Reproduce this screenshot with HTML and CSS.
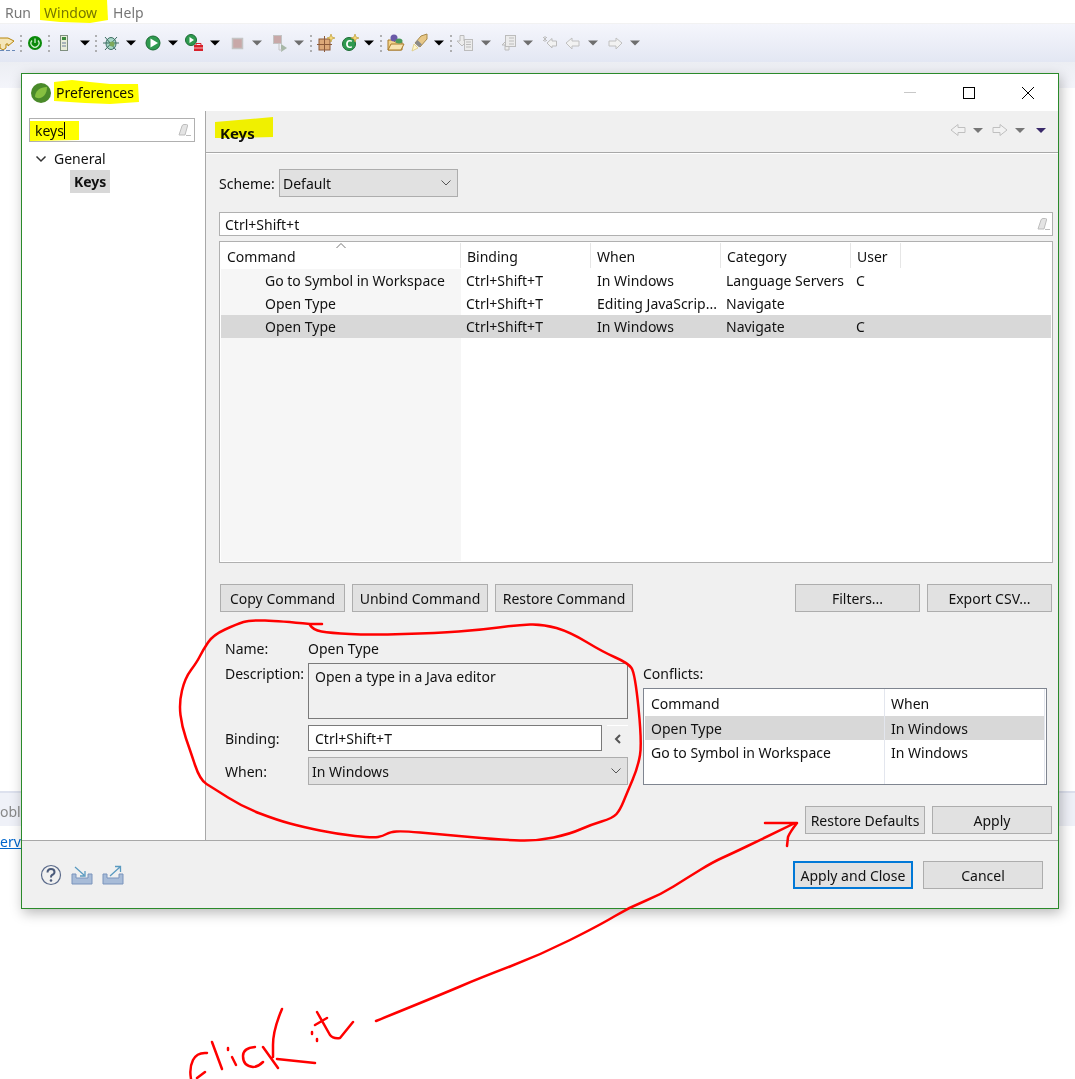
FILE: index.html
```html
<!DOCTYPE html>
<html lang="en">
<head>
<meta charset="utf-8">
<title>Preferences</title>
<link rel="stylesheet" href="styles.css">
</head>
<body>
<svg width="0" height="0" class="defs">
  <defs>
    <symbol id="eraser" viewBox="0 0 14 14"><path d="M2 12 L5 3 Q5.500 1.500 7 1.500 H9.500 Q11 1.500 10.500 3 L8 12 Z" fill="#e4e4e4" stroke="#bdbdbd"/><path d="M9 12.500 H14" stroke="#bdbdbd"/></symbol>
    <symbol id="chev" viewBox="0 0 12 8"><path d="M1.500 1.500 L6 6 L10.500 1.500" fill="none" stroke="#555" stroke-width="1"/></symbol>
    <symbol id="chevdark" viewBox="0 0 12 8"><path d="M1.500 1.500 L6 6 L10.500 1.500" fill="none" stroke="#333" stroke-width="1.500"/></symbol>
  </defs>
</svg>

<div class="app">
  <div class="menubar"><span class="mi">Run</span><span class="mi">Window</span><span class="mi">Help</span></div>
  <svg class="toolbar" width="1075" height="38" viewBox="0 24 1075 38">
    <!-- partial icon -->
    <path d="M-2 38 H8 L14 41 L8 46 V44 H6 V48 L3 50 L0 48 V44 H-2" fill="#f5e6b8" stroke="#b8860b"/>
    <path d="M0 50.500 H15" stroke="#6a8ab8" stroke-dasharray="4 2"/>
    <!-- separators -->
    <g stroke="#9a9a9a" stroke-dasharray="2 3" stroke-width="1.500">
      <path d="M21 35 V52"/><path d="M49 35 V52"/><path d="M96 35 V52"/><path d="M311 35 V52"/><path d="M381 35 V52"/><path d="M451 35 V52"/>
    </g>
    <!-- spring power -->
    <circle cx="35" cy="43" r="7" fill="#0a8a0a"/><path d="M32 40.500 A4 4 0 1 0 38 40.500" fill="none" stroke="#cfeecf" stroke-width="1.300"/><path d="M35 38.500 V43" stroke="#cfeecf" stroke-width="1.300"/>
    <!-- server -->
    <rect x="60.500" y="35.500" width="7" height="15" fill="#e8ecd8" stroke="#7f8f7f"/><rect x="62" y="37" width="4" height="3" fill="#3c8a3c"/><path d="M62 43 H66 M62 46 H66" stroke="#6a7a9a"/>
    <!-- bug -->
    <ellipse cx="111" cy="43.500" rx="5" ry="6" fill="#a8d8c8" stroke="#3d6e62"/><path d="M105 37 L116 50 M117 37 L105 50 M103 43 H119" stroke="#3d6e62"/><circle cx="112" cy="44" r="2.500" fill="#7ea85a"/>
    <!-- run -->
    <circle cx="153" cy="43" r="7" fill="#2f9a4f" stroke="#1c6b34"/><path d="M150.500 38.500 L158 43 L150.500 47.500 Z" fill="#fff"/>
    <!-- run with toolbox -->
    <circle cx="191" cy="40" r="5.500" fill="#2f9a4f" stroke="#1c6b34"/><path d="M189.500 37 L194 40 L189.500 43 Z" fill="#fff"/>
    <rect x="194" y="45" width="9" height="6" fill="#d8202a"/><path d="M196 45 V43.500 H201 V45" fill="none" stroke="#d8202a"/><path d="M194 48 H203" stroke="#fff" stroke-width=".7"/>
    <!-- stop -->
    <rect x="232.500" y="38.500" width="10" height="10" fill="#c8a8a8" stroke="#c4c4c4" stroke-width="1.500"/>
    <!-- disconnect -->
    <rect x="273.500" y="35.500" width="8" height="8" fill="#c8a8a8" stroke="#c4c4c4"/><path d="M281 44 L287 48 L281 52 Z" fill="#a8b8a8"/><path d="M279 44 V50 H282" stroke="#c4c4c4" fill="none"/>
    <!-- grid -->
    <rect x="319" y="39" width="11" height="11" fill="#dca878" stroke="#8c5a3a"/><path d="M324.500 36 V52 M317 44.500 H332" stroke="#8c5a3a"/><path d="M331 34 L332 37 L335 38 L332 39 L331 42 L330 39 L327 38 L330 37 Z" fill="#f5d878" stroke="#b8962a" stroke-width=".6"/>
    <!-- class C -->
    <circle cx="349" cy="44" r="6.500" fill="#2f9a4f" stroke="#1c6b34"/><text class="cglyph" x="349" y="48">C</text><path d="M355 34 L356 37 L359 38 L356 39 L355 42 L354 39 L351 38 L354 37 Z" fill="#f5d878" stroke="#b8962a" stroke-width=".6"/>
    <!-- folder -->
    <path d="M388 50 V40 H393 L395 42 H402 V50 Z" fill="#f4d48c" stroke="#a87a2a"/><path d="M388 50 L391 44 H404 L401 50 Z" fill="#f8e4b0" stroke="#a87a2a"/><circle cx="394" cy="38" r="3.500" fill="#6a5aa8"/><ellipse cx="399" cy="41" rx="3.500" ry="2.500" fill="#4a9a5a"/>
    <!-- pen -->
    <path d="M421 36 L427 34 L427 39 L420 47 L415 43 Z" fill="#e8c888" stroke="#a88a4a"/><path d="M417.500 40 L422 44.500 L419 47 L415 43 Z" fill="#8a8a8a"/><path d="M414 44 L418 48 L412 51 Z" fill="#fff4c8" stroke="#e0d090"/>
    <!-- next / prev annotation -->
    <path d="M460 35.500 H464 V41 H467 L462 46 L457 41 H460 Z" fill="#ececec" stroke="#bcbcbc"/><rect x="464.500" y="39.500" width="8" height="11" fill="#ececec" stroke="#bcbcbc"/><path d="M466 42 H471 M466 44.500 H471 M466 47 H471" stroke="#bcbcbc"/>
    <path d="M505 50 H509 V45 H512 L507 40 L502 45 H505 Z" fill="#ececec" stroke="#bcbcbc"/><rect x="505.500" y="35.500" width="10" height="11" fill="#ececec" stroke="#bcbcbc"/><path d="M509 38 H514 M509 41 H514 M509 44 H514" stroke="#bcbcbc"/>
    <!-- last edit -->
    <path d="M547 43 L552 38.500 V41 H556.500 V46 H552 V48 L547 43 Z M543 37 L547 41 M547 37 L543 41 M545 36 V42" fill="#f2f2f2" stroke="#bcbcbc"/>
    <!-- back / fwd -->
    <path d="M566 43 L572 38 V41 H579 V46 H572 V49 Z" fill="#f2f2f2" stroke="#c0c0c0"/>
    <path d="M622 43 L616 38 V41 H609 V46 H616 V49 Z" fill="#f2f2f2" stroke="#c0c0c0"/>
    <!-- dropdown carets -->
    <g fill="#000"><path d="M80 40.500 H90 L85 45.500 Z"/><path d="M126 40.500 H136 L131 45.500 Z"/><path d="M168 40.500 H178 L173 45.500 Z"/><path d="M210 40.500 H220 L215 45.500 Z"/><path d="M364 40.500 H374 L369 45.500 Z"/><path d="M434 40.500 H444 L439 45.500 Z"/></g>
    <g fill="#6e6e6e"><path d="M252 40.500 H262 L257 45.500 Z"/><path d="M294 40.500 H304 L299 45.500 Z"/><path d="M481 40.500 H491 L486 45.500 Z"/><path d="M523 40.500 H533 L528 45.500 Z"/><path d="M588 40.500 H598 L593 45.500 Z"/><path d="M630 40.500 H640 L635 45.500 Z"/></g>
  </svg>
  <div class="substrip"></div>
  <div class="workspace"></div>
  <div class="tabstrip"><span>oble</span></div>
  <a class="serverlink">erve</a>
</div>

<section class="dialog">
  <header class="titlebar">
    <svg class="applogo" width="22" height="22" viewBox="0 0 22 22"><circle cx="11" cy="11" r="10" fill="#4a8a2a"/><path d="M5 15 C5 9 10 5 17 5 C17 12 13 17 7 16 Z" fill="#86c040"/><path d="M2 11 A9 9 0 0 0 11 20 A9 9 0 0 1 2 11" fill="#2a5a1a"/></svg>
    <span class="title">Preferences</span>
    <div class="winbtns">
      <svg width="14" height="14" viewBox="0 0 14 14"><path d="M1 6.500 H13" stroke="#c8c8c8"/></svg>
      <svg width="14" height="14" viewBox="0 0 14 14"><rect x="1.500" y="1.500" width="11" height="11" fill="none" stroke="#000"/></svg>
      <svg width="14" height="14" viewBox="0 0 14 14"><path d="M1 1 L13 13 M13 1 L1 13" stroke="#000"/></svg>
    </div>
  </header>

  <div class="dbody">
    <aside class="sidebar">
      <div class="search"><span>keys</span><i class="caret"></i><svg class="erase" width="14" height="14"><use href="#eraser"/></svg></div>
      <div class="treeitem"><svg width="12" height="8"><use href="#chevdark"/></svg><span>General</span></div>
      <div class="treeleaf"><b>Keys</b></div>
    </aside>

    <main class="panel">
      <div class="panelhead">
        <h1>Keys</h1>
        <svg width="100" height="14" viewBox="0 0 100 14">
          <path d="M1 7 L8 1.500 V4.500 H15 V9.500 H8 V12.500 Z" fill="#f2f2f2" stroke="#c0c0c0"/>
          <path d="M23 5 H33 L28 10 Z" fill="#777"/>
          <path d="M57 7 L50 1.500 V4.500 H43 V9.500 H50 V12.500 Z" fill="#f2f2f2" stroke="#c0c0c0"/>
          <path d="M65 5 H75 L70 10 Z" fill="#777"/>
          <path d="M86 5 H96 L91 10 Z" fill="#3a2a6a"/>
        </svg>
      </div>

      <div class="content">
        <div class="schemerow">
          <label>Scheme:</label>
          <div class="select scheme"><span>Default</span><svg width="12" height="8"><use href="#chev"/></svg></div>
        </div>
        <div class="filter"><span>Ctrl+Shift+t</span><svg width="14" height="14"><use href="#eraser"/></svg></div>

        <div class="table main">
          <div class="row head"><div>Command<svg class="sort" width="10" height="6" viewBox="0 0 10 6"><path d="M.500 5 L5 .500 L9.500 5" fill="none" stroke="#777"/></svg></div><div>Binding</div><div>When</div><div>Category</div><div>User</div></div>
          <div class="row"><div class="cmd">Go to Symbol in Workspace</div><div>Ctrl+Shift+T</div><div>In Windows</div><div>Language Servers</div><div>C</div></div>
          <div class="row"><div class="cmd">Open Type</div><div>Ctrl+Shift+T</div><div>Editing JavaScrip...</div><div>Navigate</div><div></div></div>
          <div class="row sel"><div class="cmd">Open Type</div><div>Ctrl+Shift+T</div><div>In Windows</div><div>Navigate</div><div>C</div></div>
          <div class="row filler"><div class="cmd"></div></div>
        </div>

        <div class="btnrow">
          <button class="btn w125">Copy Command</button>
          <button class="btn w136">Unbind Command</button>
          <button class="btn w138">Restore Command</button>
          <span class="spacer"></span>
          <button class="btn w125">Filters...</button>
          <button class="btn w125">Export CSV...</button>
        </div>

        <div class="details">
          <div class="form">
            <label class="lname">Name:</label><div class="namev">Open Type</div>
            <label class="ldesc">Description:</label><div class="desc">Open a type in a Java editor</div>
            <label class="lgap">Binding:</label><div class="bindrow"><div class="bind">Ctrl+Shift+T</div><div class="addbtn"><svg width="8" height="10" viewBox="0 0 8 10"><path d="M6 1 L2 5 L6 9" fill="none" stroke="#555" stroke-width="2"/></svg></div></div>
            <label class="lgap">When:</label><div class="select when"><span>In Windows</span><svg width="12" height="8"><use href="#chev"/></svg></div>
          </div>
          <div class="conflicts">
            <label>Conflicts:</label>
            <div class="table small">
              <div class="crow chead"><div>Command</div><div>When</div></div>
              <div class="crow sel"><div>Open Type</div><div>In Windows</div></div>
              <div class="crow"><div>Go to Symbol in Workspace</div><div>In Windows</div></div>
              <div class="crow cfill"><div></div><div></div></div>
            </div>
          </div>
        </div>

        <div class="btnrow end">
          <button class="btn w120">Restore Defaults</button>
          <button class="btn w120">Apply</button>
        </div>
      </div>
    </main>
  </div>

  <footer class="dfoot">
    <div class="foothelp">
      <svg width="22" height="22" viewBox="0 0 22 22"><circle cx="11" cy="11" r="9.500" fill="none" stroke="#5a6a8a" stroke-width="1.200"/><path d="M7.500 8.500 Q7.500 5 11 5 Q14.500 5 14.500 8 Q14.500 10 12 11 Q11 11.500 11 13.500" fill="none" stroke="#4a5a7a" stroke-width="2"/><circle cx="11" cy="16.500" r="1.300" fill="#4a5a7a"/></svg>
      <svg width="22" height="20" viewBox="0 0 22 20"><path d="M1 9 H5 V13 H17 V9 H21 V19 H1 Z" fill="#a8bcd8" stroke="#7a94bc"/><path d="M4 2 L13 10 M14 6 V11 H9" fill="none" stroke="#5a9ac0" stroke-width="1.300"/></svg>
      <svg width="22" height="20" viewBox="0 0 22 20"><path d="M1 9 H5 V13 H17 V9 H21 V19 H1 Z" fill="#a8bcd8" stroke="#7a94bc"/><path d="M8 11 L18 2 M13 1.500 H18.500 V7" fill="none" stroke="#5a9ac0" stroke-width="1.300"/></svg>
    </div>
    <div class="footbtns">
      <button class="btn w120 primary">Apply and Close</button>
      <button class="btn w120">Cancel</button>
    </div>
  </footer>
</section>

<svg class="ink" width="1075" height="1079" viewBox="0 0 1075 1079">
  <g class="hl" fill="#ffff00">
    <path d="M40 0 H107 L108 20 L90 23 L60 22 L40 20 Z"/>
    <path d="M54 82 L72 80 L90 82 L110 84 L138 84 L139 102 L110 104 L85 103 L54 101 Z"/>
    <path d="M30 121 H79 V140 L30 141 Z"/>
    <path d="M215 122 L273 117 V137 L225 138 L215 138 Z"/>
  </g>
  <g class="red">
    <path d="M322 624 L310 624 Q280 621 265 620.500 Q250 620 243.500 622 Q237 624 225 629.500 Q213 635 208 642.500 Q203 650 200 656 Q197 662 191 670 Q185 678 182 690.500 Q179 703 180.500 715 Q182 727 186 738.500 Q190 750 195 765 Q200 780 206.500 784 Q213 788 228 797.500 Q243 807 260 813.500 Q277 820 290 823.500 Q303 827 320 830.500 Q337 834 355 836 Q373 838 378 837 Q383 836 386.500 834 Q390 832 396.500 831.500 Q403 831 420 832.500 Q437 834 470 837 Q503 840 520 840.500 Q537 841 553.500 837.500 Q570 834 580 829.500 Q590 825 601.500 821.500 Q613 818 616.500 814 Q620 810 623.500 801.500 Q627 793 632.500 780 Q638 767 640 755 Q642 743 638.500 708 Q635 673 631.500 668 Q628 663 615.500 657.500 Q603 652 586.500 642 Q570 632 556.500 628 Q543 624 530 624.500 Q517 625 498.500 627.500 Q480 630 458.500 631.500 Q437 633 403.500 634 Q370 635 350 634 Q330 633 321.500 631.500 Q313 630 310 625"/>
    <path d="M376 1021 Q440 995 460 986.500 Q480 978 510 966.500 Q540 955 570 940 Q600 925 615 916 Q630 907 645 901 Q660 895 673.500 886.500 Q687 878 700 870 Q713 862 723 857.500 Q733 853 746.500 846.500 Q760 840 795 823 M765 823 L797 823 Q790 832 788 837 L787 846"/>
    <path d="M207 1053 Q197 1052 193 1060 Q189 1068 191 1079 M205 1072 L197 1078"/>
    <path d="M212 1042 L222 1069"/>
    <path d="M228 1048 V1050 M232 1057 L236 1065"/>
    <path d="M255 1047 Q243 1048 243 1056 Q243 1066 253 1067 Q258 1067 263 1062"/>
    <path d="M282 1009 Q273 1030 273 1045 V1057 M277 1059 L315 1063 M263 1047 L278 1068"/>
    <path d="M312 1032 V1034 M317 1039 V1041"/>
    <path d="M315 1025 L327 1018 M317 1012 L330 1035 Q333 1039 340 1038 L353 1022"/>
  </g>
</svg>
</body>
</html>
```
FILE: styles.css
```css
* { box-sizing: border-box; }
html, body { margin: 0; padding: 0; }
body {
  width: 1075px;
  height: 1079px;
  overflow: hidden;
  position: relative;
  background: #fff;
  font-family: "Noto Sans", "Open Sans", sans-serif;
  font-size: 14px;
  color: #111;
}
.defs { position: absolute; }

/* workbench behind the dialog */
.app { display: flex; flex-direction: column; }
.menubar { height: 24px; display: flex; padding-left: 5px; gap: 13px; color: #777; line-height: 25px; background: #fff; border-bottom: 1px solid #f2f2f2; }
.mi:last-child { margin-left: 3px; }
.toolbar { display: block; flex: none; height: 38px; background: linear-gradient(#f5f6fc, #e3e7f3); }
.cglyph { font-family: "Noto Sans", sans-serif; font-size: 11px; font-weight: 700; fill: #fff; text-anchor: middle; }
.substrip { height: 26px; background: linear-gradient(#eceef3, #f4f5fb); }
.workspace { height: 703px; background: #fff; }
.tabstrip { height: 35px; background: #eff1f8; border-top: 2px solid #dde1ee; overflow: hidden; color: #888; line-height: 38px; white-space: nowrap; }
.serverlink { display: block; line-height: 32px; color: #0066cc; text-decoration: underline; }

/* dialog */
.dialog {
  position: absolute;
  left: 21px; top: 73px;
  width: 1038px; height: 836px;
  border: 1px solid #2a8a2a;
  background: #f0f0f0;
  box-shadow: 2px 4px 12px rgba(0,0,0,.28);
  display: flex; flex-direction: column;
}
.titlebar { height: 37px; background: #fff; display: flex; align-items: center; padding-left: 8px; }
.applogo { flex: none; }
.title { margin-left: 4px; }
.winbtns { margin-left: auto; display: flex; gap: 45px; padding-right: 23px; align-items: center; }

.dbody { height: 729px; display: flex; }
.sidebar { width: 184px; background: #fff; border-right: 1px solid #a8a8a8; padding: 7px 10px 0 7px; }
.search { height: 24px; width: 166px; border: 1px solid #b0b0b0; display: flex; align-items: center; padding: 0 3px 0 5px; }
.caret { width: 1px; height: 17px; background: #000; }
.erase { margin-left: auto; }
.treeitem { display: flex; align-items: center; gap: 7px; margin: 5px 0 0 6px; height: 23px; }
.treeleaf { margin: 0 0 0 41px; }
.treeleaf b { display: inline-block; height: 23px; line-height: 23px; padding: 0 4px; background: #d8d8d8; }

.panel { flex: 1; display: flex; flex-direction: column; min-width: 0; }
.panelhead { height: 42px; flex: none; display: flex; align-items: center; justify-content: space-between; padding: 3px 8px 0 14px; border-bottom: 1px solid #a8a8a8; }
.panelhead h1 { margin: 0; font-size: 15px; font-weight: 700; }
.panelhead svg { margin-top: -6px; }
.content { flex: 1; border-top: 1px solid #fff; padding: 15px 5px 0 13px; display: flex; flex-direction: column; }

.schemerow { height: 28px; display: flex; align-items: center; }
.schemerow label { width: 60px; }
.select { background: #e1e1e1; border: 1px solid #adadad; height: 28px; display: flex; align-items: center; justify-content: space-between; padding: 0 5px 0 3px; }
.scheme { width: 179px; }
.filter { margin-top: 15px; height: 24px; background: #fff; border: 1px solid #b0b0b0; display: flex; align-items: center; justify-content: space-between; padding: 0 2px 0 5px; }

.table { background: #fff; }
.main { margin-top: 5px; height: 322px; border: 1px solid #b0b0b0; padding: 1px; display: flex; flex-direction: column; }
.row { display: grid; grid-template-columns: 240px 130px 130px 130px 50px 1fr; height: 23px; line-height: 23px; white-space: nowrap; }
.row > div { padding-left: 5px; overflow: hidden; }
.row > div:nth-child(3) { padding-left: 6px; }
.row.head { height: 26px; line-height: 27px; }
.row.head > div { position: relative; padding-left: 6px; border-right: 1px solid #e6e6e6; margin-bottom: 1px; }
.sort { position: absolute; left: 115px; top: 0; }
.row .cmd { padding-left: 44px; background: #f6f6f6; }
.row.sel, .row.sel .cmd { background: #d8d8d8; }
.filler { flex: 1; height: auto; }

.btnrow { margin-top: 21px; display: flex; gap: 7px; padding: 0 1px; }
.spacer { flex: 1; }
.btn { height: 28px; padding: 0; font: inherit; color: inherit; background: #e1e1e1; border: 1px solid #adadad; white-space: nowrap; }
.w120 { width: 120px; }
.w125 { width: 125px; }
.w136 { width: 136px; }
.w138 { width: 138px; }
.primary { border: 2px solid #0078d7; }

.details { margin-top: 26px; height: 147px; display: flex; gap: 15px; align-items: flex-end; }
.form { width: 409px; display: grid; grid-template-columns: 89px 320px; grid-template-rows: 25px 56px 32px 34px; align-items: center; }
.form > label { padding-left: 6px; }
.lname, .namev { margin-bottom: 4px; }
.form .ldesc { align-self: start; padding-top: 1px; }
.namev { line-height: 22px; }
.desc { height: 56px; border: 1px solid #7a7a7a; padding: 3px 6px; }
.bindrow, .form .when, .lgap { margin-top: 6px; }
.bindrow { display: flex; height: 26px; }
.bind { width: 294px; background: #fff; border: 1px solid #7a7a7a; padding: 0 6px; line-height: 25px; }
.addbtn { flex: 1; border-top: 1px solid #fff; margin-left: 5px; display: flex; align-items: center; justify-content: center; }

.conflicts { width: 404px; }
.conflicts label { display: block; margin-bottom: 4px; line-height: 20px; }
.small { height: 97px; border: 1px solid #7f8590; padding: 0 1px; display: flex; flex-direction: column; }
.crow { display: grid; grid-template-columns: 240px 1fr; height: 24px; line-height: 26px; white-space: nowrap; border-right: 1px solid #e3e6ee; }
.crow > div { padding-left: 6px; }
.crow > div:first-child { border-right: 1px solid #e3e6ee; }
.chead { height: 27px; line-height: 30px; }
.crow.sel { background: #d8d8d8; }
.cfill { flex: 1; }

.end { margin-top: 21px; justify-content: flex-end; }

.dfoot { flex: 1; border-top: 1px solid #a8a8a8; display: flex; justify-content: space-between; padding: 20px 15px 0 18px; }
.foothelp { display: flex; gap: 9px; align-items: center; height: 28px; }
.footbtns { display: flex; gap: 10px; }

/* hand annotations */
.ink { position: absolute; left: 0; top: 0; pointer-events: none; }
.hl { mix-blend-mode: multiply; }
.red { fill: none; stroke: #f00; stroke-width: 2.500; stroke-linecap: round; stroke-linejoin: round; }
```
